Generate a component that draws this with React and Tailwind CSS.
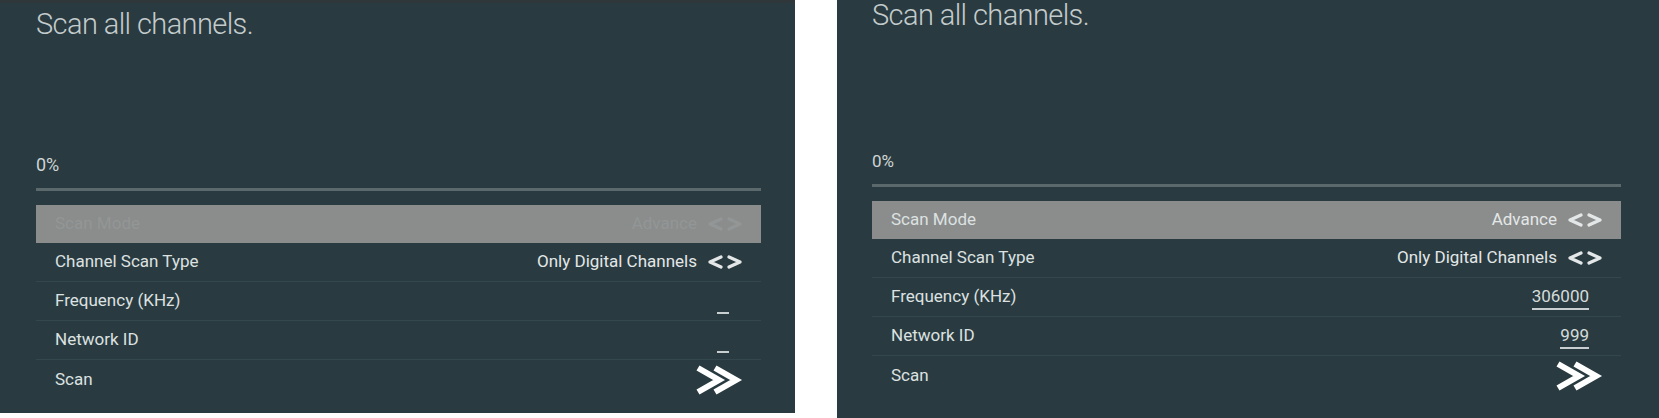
const ArrowPair = () => (
  <svg
    width="36"
    height="14"
    viewBox="0 0 36 14"
    fill="none"
    stroke="currentColor"
    strokeWidth="3.2"
    strokeLinecap="round"
    strokeLinejoin="round"
  >
    <polyline points="14,2 3,7 14,12" />
    <polyline points="22,2 33,7 22,12" />
  </svg>
);

const DoubleChevron = () => (
  <svg
    width="48"
    height="30"
    viewBox="0 0 48 30"
    fill="none"
    stroke="#ffffff"
    strokeWidth="6"
    className="overflow-visible"
  >
    <polyline points="3,3 24,15 3,27" />
    <polyline points="20,3 41,15 20,27" />
  </svg>
);

const Row = ({ label, children, active, dim, last }) => (
  <div
    className={
      active
        ? "flex h-[38px] items-center justify-between bg-[#8a8d8c] pl-[19px] pr-[18px]"
        : last
        ? "flex h-[39px] items-center justify-between pl-[19px] pr-[18px]"
        : "flex h-[39px] items-center justify-between border-b border-[#34474c] pl-[19px] pr-[18px]"
    }
  >
    <span className={dim ? "text-[#939696]" : "text-[#dde1e1]"}>{label}</span>
    <div
      className={
        dim
          ? "flex items-center gap-[10px] text-[#939696]"
          : "flex items-center gap-[10px] text-[#e4e7e7]"
      }
    >
      {children}
    </div>
  </div>
);

// editable number field, just an underline when empty
const InputValue = ({ value }) => (
  <span className="mr-[14px] mt-[2px] block h-[24px] min-w-[12px] border-b-2 border-[#c9cfd0] text-right leading-[21px] text-[#d6dbdb]">
    {value}
  </span>
);

const ScanList = ({ filled }) => (
  <div className="text-[17px]">
    <Row label="Scan Mode" active dim={!filled}>
      <span>Advance</span>
      <ArrowPair />
    </Row>
    <Row label="Channel Scan Type">
      <span>Only Digital Channels</span>
      <ArrowPair />
    </Row>
    <Row label="Frequency (KHz)">
      <InputValue value={filled ? "306000" : ""} />
    </Row>
    <Row label="Network ID">
      <InputValue value={filled ? "999" : ""} />
    </Row>
    <Row label="Scan" last>
      <DoubleChevron />
    </Row>
  </div>
);

export default function App() {
  return (
    <div
      className="flex h-[418px] w-[1659px] items-start bg-white"
      style={{ fontFamily: "Roboto, 'Noto Sans', sans-serif" }}
    >
      {/* before: empty advanced scan */}
      <div className="h-[413px] w-[795px] shrink-0 border-t-[3px] border-[#2f373a] bg-[#293b40] pl-[36px] pr-[34px]">
        <h1 className="mt-[7px] text-[29px] font-light leading-none tracking-[-0.6px] text-[#c4cbcc]">
          Scan all channels.
        </h1>
        <p className="mt-[117px] text-[18px] leading-none text-[#cfd4d5]">0%</p>
        <div className="mt-[14px] h-[3px] bg-[#5b696c]" />
        <div className="mt-[14px]">
          <ScanList />
        </div>
      </div>

      <div className="w-[42px] shrink-0" />

      {/* after: values filled in */}
      <div className="h-[418px] flex-1 bg-[#293b40] pl-[35px] pr-[38px]">
        <h1 className="mt-[1px] text-[29px] font-light leading-none tracking-[-0.6px] text-[#c4cbcc]">
          Scan all channels.
        </h1>
        <p className="mt-[123px] text-[17px] leading-none text-[#cfd4d5]">0%</p>
        <div className="mt-[14px] h-[3px] bg-[#5b696c]" />
        <div className="mt-[14px]">
          <ScanList filled />
        </div>
      </div>
    </div>
  );
}
